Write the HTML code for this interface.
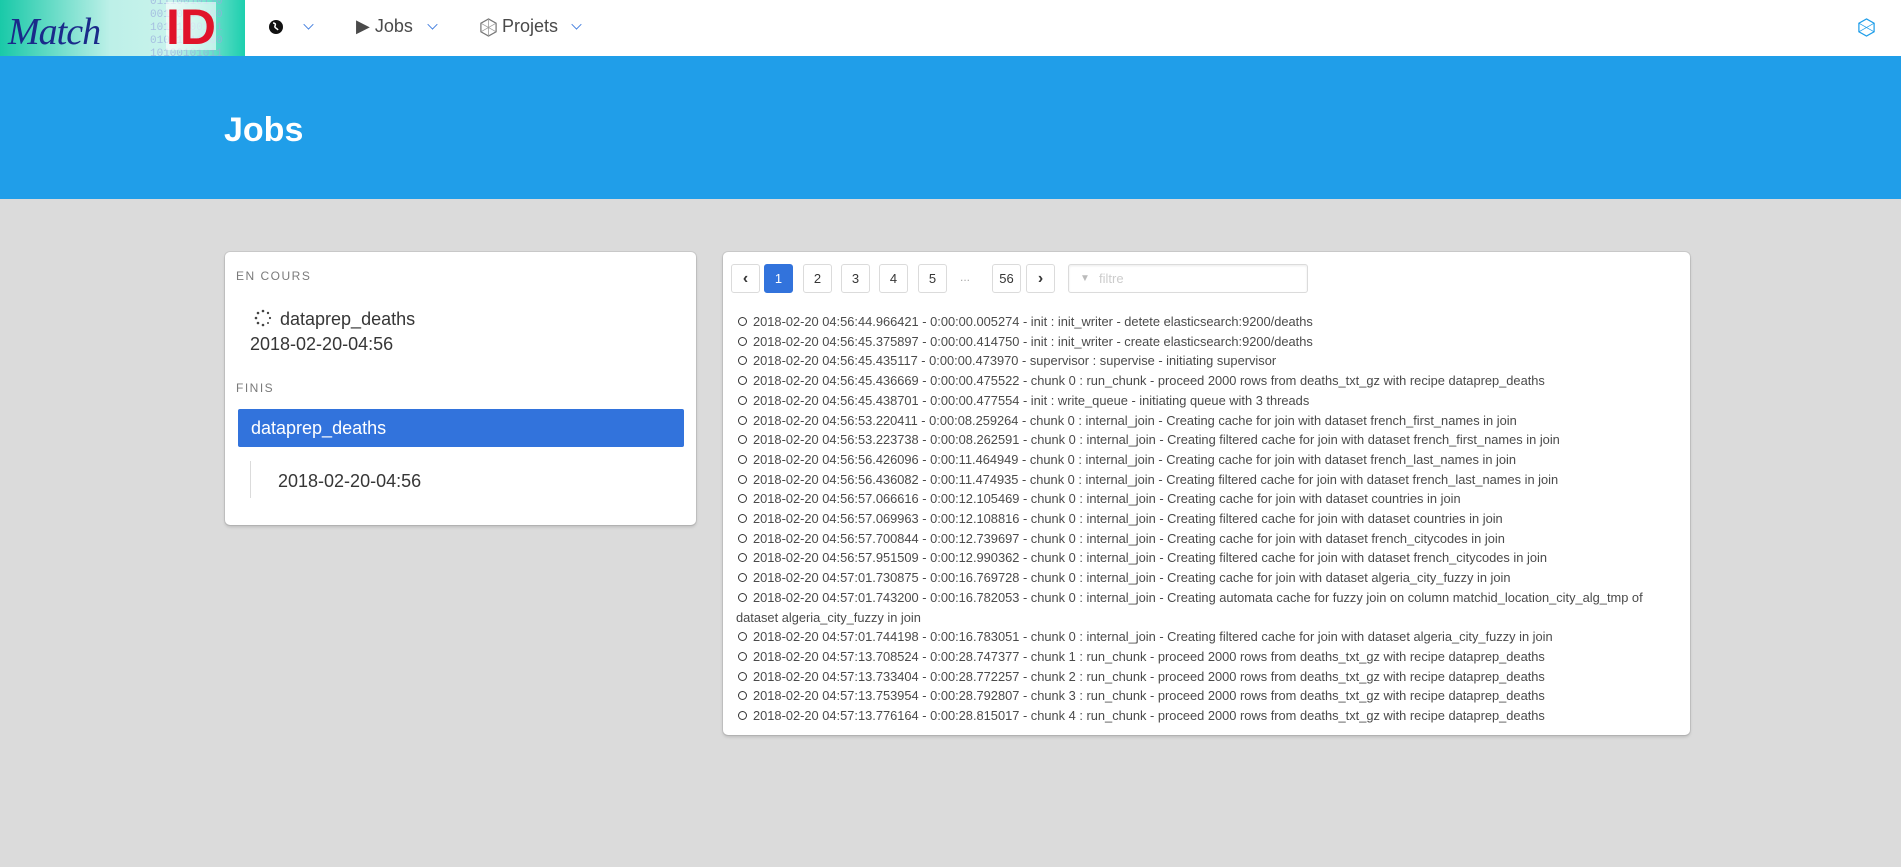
<!DOCTYPE html>
<html><head><meta charset="utf-8"><style>
*{box-sizing:border-box;margin:0;padding:0}
body{width:1901px;height:867px;background:#dbdbdb;font-family:"Liberation Sans","DejaVu Sans",sans-serif;color:#363636;position:relative;overflow:hidden}
.nav{position:absolute;left:0;top:0;width:1901px;height:56px;background:#fff}
.logo{position:absolute;left:0;top:0;width:245px;height:56px;background:linear-gradient(90deg,#19c9a8 0%,#bdf0e8 45%,#c9f3ec 70%,#1ccfae 100%);overflow:hidden}
.nav .it{position:absolute;top:16px;font-size:18px;color:#4a4a4a}
.chev{position:absolute;top:20px;width:9px;height:9px;border-right:1.5px solid #3273dc;border-bottom:1.5px solid #3273dc;transform:rotate(45deg) scale(.8,.8)}
.hero{position:absolute;left:0;top:56px;width:1901px;height:143px;background:#209ee9}
.hero h1{position:absolute;left:224px;top:54px;font-size:34px;color:#fff;font-weight:bold;line-height:40px}
.card{position:absolute;background:#fff;border-radius:5px;box-shadow:0 2px 3px rgba(10,10,10,.15),0 0 0 1px rgba(10,10,10,.08)}
.lab{position:absolute;font-size:12px;letter-spacing:1.5px;color:#7a7a7a}
.pb{position:absolute;top:264px;height:29px;border:1px solid #dbdbdb;border-radius:3px;font-size:13px;text-align:center;line-height:27px;color:#363636;background:#fff}
.log{position:absolute;left:736px;top:312px;width:940px;font-size:12.85px;line-height:19.7px;color:#4a4a4a}
.log div{padding-left:17px;position:relative}
.log div:before{content:"";position:absolute;left:2px;top:5px;width:7px;height:7px;border:1.6px solid #333;border-radius:50%}
.log div.w{padding-left:0;text-indent:17px}
</style></head><body>
<div class="nav">
 <div class="logo">
  <div style="position:absolute;left:150px;top:-4px;font-family:'Liberation Mono',monospace;font-size:11px;color:#9ad;line-height:13px;opacity:.7">01110010110<br>00100010100<br>10101100101<br>01001011000<br>10100101011</div>
  <div style="position:absolute;left:8px;top:10px;font-family:'Liberation Serif',serif;font-style:italic;font-size:38px;color:#1a2a8a;letter-spacing:-1px">Match</div>
  <div style="position:absolute;left:166px;top:2px;width:50px;height:48px;background:rgba(255,255,255,.6)"></div>
  <div style="position:absolute;left:166px;top:1px;font-size:50px;font-weight:bold;color:#e0132a;line-height:52px">ID</div>
 </div>
 <svg style="position:absolute;left:268px;top:19px" width="16" height="16" viewBox="0 0 16 16"><circle cx="8" cy="8" r="7" fill="#111"/><path d="M5 4c2 0 3 1 2 3s2 2 3 4" stroke="#fff" stroke-width="1.5" fill="none"/></svg>
 <div class="chev" style="left:304px"></div>
 <div class="it" style="left:356px">&#9654; Jobs</div>
 <div class="chev" style="left:428px"></div>
 <svg style="position:absolute;left:479px;top:18px" width="19" height="19" viewBox="0 0 20 20"><polygon points="10,1 18,5.5 18,14.5 10,19 2,14.5 2,5.5" fill="none" stroke="#777" stroke-width="1.3"/><path d="M2 5.5L18 14.5M18 5.5L2 14.5M10 1V19" stroke="#999" stroke-width=".8"/></svg>
 <div class="it" style="left:502px">Projets</div>
 <div class="chev" style="left:572px"></div>
 <svg style="position:absolute;left:1857px;top:18px" width="19" height="19" viewBox="0 0 20 20"><polygon points="10,1 18,5.5 18,14.5 10,19 2,14.5 2,5.5" fill="none" stroke="#209ee9" stroke-width="1.3"/><path d="M2 5.5L18 14.5M18 5.5L2 14.5" stroke="#209ee9" stroke-width=".8"/></svg>
</div>
<div class="hero"><h1>Jobs</h1></div>

<div class="card" style="left:225px;top:252px;width:471px;height:273px"></div>
<div class="lab" style="left:236px;top:269px">EN COURS</div>
<svg style="position:absolute;left:254px;top:309px" width="18" height="18" viewBox="0 0 18 18"><g fill="#444"><circle cx="9" cy="2" r="1.3"/><circle cx="14" cy="4" r="1.2"/><circle cx="16" cy="9" r="1.1"/><circle cx="14" cy="14" r="1"/><circle cx="9" cy="16" r="1.3"/><circle cx="4" cy="14" r="1.3"/><circle cx="2" cy="9" r="1.3"/><circle cx="4" cy="4" r="1.3"/></g></svg>
<div style="position:absolute;left:280px;top:309px;font-size:18px">dataprep_deaths</div>
<div style="position:absolute;left:250px;top:334px;font-size:18px">2018-02-20-04:56</div>
<div class="lab" style="left:236px;top:381px">FINIS</div>
<div style="position:absolute;left:238px;top:409px;width:446px;height:38px;background:#3273dc;border-radius:2px;color:#fff;font-size:18px;line-height:38px;padding-left:13px">dataprep_deaths</div>
<div style="position:absolute;left:250px;top:461px;width:1px;height:37px;background:#dbdbdb"></div>
<div style="position:absolute;left:278px;top:471px;font-size:18px">2018-02-20-04:56</div>

<div class="card" style="left:723px;top:252px;width:967px;height:483px"></div>
<div class="pb" style="left:731px;width:29px;font-weight:bold;font-size:16px">&#8249;</div>
<div class="pb" style="left:764px;width:29px;background:#3273dc;border-color:#3273dc;color:#fff">1</div>
<div class="pb" style="left:803px;width:29px">2</div>
<div class="pb" style="left:841px;width:29px">3</div>
<div class="pb" style="left:879px;width:29px">4</div>
<div class="pb" style="left:918px;width:29px">5</div>
<div style="position:absolute;left:960px;top:270px;font-size:12px;color:#aaa">...</div>
<div class="pb" style="left:992px;width:29px">56</div>
<div class="pb" style="left:1026px;width:29px;font-weight:bold;font-size:16px">&#8250;</div>
<div style="position:absolute;left:1068px;top:264px;width:240px;height:29px;border:1px solid #dbdbdb;border-radius:3px;box-shadow:inset 0 1px 2px rgba(0,0,0,.08);font-size:13px;color:#ccc;line-height:27px;padding-left:30px">filtre<span style="position:absolute;left:11px;top:0;font-size:10px;color:#bbb">&#9660;</span></div>

<div class="log">
<div>2018-02-20 04:56:44.966421 - 0:00:00.005274 - init : init_writer - detete elasticsearch:9200/deaths</div>
<div>2018-02-20 04:56:45.375897 - 0:00:00.414750 - init : init_writer - create elasticsearch:9200/deaths</div>
<div>2018-02-20 04:56:45.435117 - 0:00:00.473970 - supervisor : supervise - initiating supervisor</div>
<div>2018-02-20 04:56:45.436669 - 0:00:00.475522 - chunk 0 : run_chunk - proceed 2000 rows from deaths_txt_gz with recipe dataprep_deaths</div>
<div>2018-02-20 04:56:45.438701 - 0:00:00.477554 - init : write_queue - initiating queue with 3 threads</div>
<div>2018-02-20 04:56:53.220411 - 0:00:08.259264 - chunk 0 : internal_join - Creating cache for join with dataset french_first_names in join</div>
<div>2018-02-20 04:56:53.223738 - 0:00:08.262591 - chunk 0 : internal_join - Creating filtered cache for join with dataset french_first_names in join</div>
<div>2018-02-20 04:56:56.426096 - 0:00:11.464949 - chunk 0 : internal_join - Creating cache for join with dataset french_last_names in join</div>
<div>2018-02-20 04:56:56.436082 - 0:00:11.474935 - chunk 0 : internal_join - Creating filtered cache for join with dataset french_last_names in join</div>
<div>2018-02-20 04:56:57.066616 - 0:00:12.105469 - chunk 0 : internal_join - Creating cache for join with dataset countries in join</div>
<div>2018-02-20 04:56:57.069963 - 0:00:12.108816 - chunk 0 : internal_join - Creating filtered cache for join with dataset countries in join</div>
<div>2018-02-20 04:56:57.700844 - 0:00:12.739697 - chunk 0 : internal_join - Creating cache for join with dataset french_citycodes in join</div>
<div>2018-02-20 04:56:57.951509 - 0:00:12.990362 - chunk 0 : internal_join - Creating filtered cache for join with dataset french_citycodes in join</div>
<div>2018-02-20 04:57:01.730875 - 0:00:16.769728 - chunk 0 : internal_join - Creating cache for join with dataset algeria_city_fuzzy in join</div>
<div class="w">2018-02-20 04:57:01.743200 - 0:00:16.782053 - chunk 0 : internal_join - Creating automata cache for fuzzy join on column matchid_location_city_alg_tmp of<br>dataset algeria_city_fuzzy in join</div>
<div>2018-02-20 04:57:01.744198 - 0:00:16.783051 - chunk 0 : internal_join - Creating filtered cache for join with dataset algeria_city_fuzzy in join</div>
<div>2018-02-20 04:57:13.708524 - 0:00:28.747377 - chunk 1 : run_chunk - proceed 2000 rows from deaths_txt_gz with recipe dataprep_deaths</div>
<div>2018-02-20 04:57:13.733404 - 0:00:28.772257 - chunk 2 : run_chunk - proceed 2000 rows from deaths_txt_gz with recipe dataprep_deaths</div>
<div>2018-02-20 04:57:13.753954 - 0:00:28.792807 - chunk 3 : run_chunk - proceed 2000 rows from deaths_txt_gz with recipe dataprep_deaths</div>
<div>2018-02-20 04:57:13.776164 - 0:00:28.815017 - chunk 4 : run_chunk - proceed 2000 rows from deaths_txt_gz with recipe dataprep_deaths</div>
</div>
</body></html>
